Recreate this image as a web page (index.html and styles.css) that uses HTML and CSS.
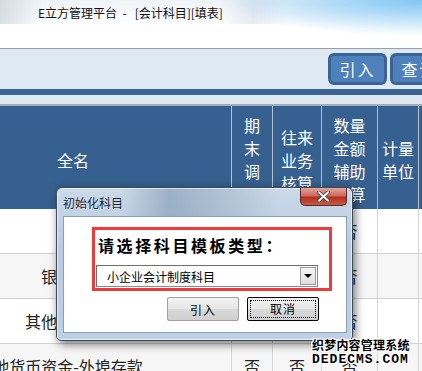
FILE: index.html
```html
<!DOCTYPE html>
<html lang="zh-CN">
<head>
  <meta charset="UTF-8">
  <meta name="viewport" content="width=device-width, initial-scale=1.0">
  <title>E立方管理平台 - [会计科目][填表]</title>
  <link rel="stylesheet" href="styles.css">
</head>
<body>
  <div class="titlebar">
    <span class="title-text">E立方管理平台 &nbsp;- &nbsp;&nbsp;[会计科目][填表]</span>
  </div>

  <div class="toolbar">
    <button class="tool-btn">引入</button>
    <button class="tool-btn">查询</button>
  </div>
  <div class="bar"></div>
  <div class="band"></div>

  <div class="grid">
    <div class="th name">全名</div>
    <div class="th">期<br>末<br>调<br>汇</div>
    <div class="th">往来<br>业务<br>核算</div>
    <div class="th">数量<br>金额<br>辅助<br>核算</div>
    <div class="th">计量<br>单位</div>
    <div class="th"></div>

    <div class="td name">现金</div>
    <div class="td">否</div>
    <div class="td">否</div>
    <div class="td">否</div>
    <div class="td"></div>
    <div class="td"></div>

    <div class="td name alt">银行存款</div>
    <div class="td alt">否</div>
    <div class="td alt">否</div>
    <div class="td alt">否</div>
    <div class="td alt"></div>
    <div class="td alt"></div>

    <div class="td name">其他货币资金</div>
    <div class="td">否</div>
    <div class="td">否</div>
    <div class="td">否</div>
    <div class="td"></div>
    <div class="td"></div>

    <div class="td name long alt">其他货币资金-外埠存款</div>
    <div class="td alt">否</div>
    <div class="td alt">否</div>
    <div class="td alt">否</div>
    <div class="td alt"></div>
    <div class="td alt"></div>
  </div>

  <!-- 初始化科目 dialog -->
  <div class="dialog">
    <div class="dlg-head">
      <span class="dlg-title">初始化科目</span>
      <span class="dlg-close">
        <svg width="13" height="11" viewBox="0 0 13 11">
          <path d="M2 1.5 L11 9.5 M11 1.5 L2 9.5" stroke="#3a3a3a" stroke-width="3.6" stroke-linecap="square"/>
          <path d="M2 1.5 L11 9.5 M11 1.5 L2 9.5" stroke="#fff" stroke-width="2" stroke-linecap="square"/>
        </svg>
      </span>
    </div>
    <div class="dlg-body">
      <div class="pick-box">
        <div class="pick-label">请选择科目模板类型：</div>
        <div class="combo">
          <span class="combo-text">小企业会计制度科目</span>
          <span class="combo-arrow">
            <svg width="8" height="4" viewBox="0 0 8 4"><path d="M0 0 H8 L4 4 Z" fill="#000"/></svg>
          </span>
        </div>
      </div>
      <div class="dlg-buttons">
        <button class="win-btn">引入</button>
        <button class="win-btn focus"><span>取消</span></button>
      </div>
    </div>
  </div>

  <div class="watermark">
    <div class="wm-cn">织梦内容管理系统</div>
    <div class="wm-en">DEDECMS.COM</div>
  </div>
</body>
</html>
```

FILE: styles.css
```css
body {
  margin: 0;
  width: 422px;
  height: 371px;
  overflow: hidden;
  position: relative;
  background: #fff;
  font-family: 'Noto Sans CJK SC', 'Liberation Sans', sans-serif;
}

.titlebar {
  height: 48px;
  border-bottom: 1px solid #9a9fa5;
  background:
    radial-gradient(ellipse 200px 36px at 100% 0, #7fc6f4, rgba(127, 198, 244, 0)),
    linear-gradient(to right, rgba(200, 208, 218, 0.7), rgba(255, 255, 255, 0) 10%, rgba(255, 255, 255, 0) 52%, rgba(214, 222, 232, 0.6) 60%, rgba(255, 255, 255, 0) 68%),
    linear-gradient(#eef3f8, #fff 55%);
  background-size: 100% 100%, 100% 24px, 100% 100%;
  background-repeat: no-repeat;
}

.title-text {
  display: block;
  padding: 4px 0 0 38px;
  font-size: 12px;
  line-height: 17px;
  color: #111;
}

.toolbar {
  height: 40px;
  margin-right: -27px;
  background: #dfe9f4;
  display: flex;
  justify-content: flex-end;
  align-items: flex-start;
  gap: 3px;
  padding-top: 4px;
  box-sizing: border-box;
}

.tool-btn {
  width: 59px;
  height: 32px;
  border: 3px solid #3b6394;
  border-radius: 6px;
  background: #4e80bc;
  color: #fff;
  font-family: inherit;
  font-size: 16px;
  letter-spacing: 2px;
  padding: 0;
}

.bar {
  height: 6px;
  background: #3a6392;
}

.band {
  height: 9px;
  background: #dde8f3;
  border-bottom: 2px solid #a6adb5;
}

.grid {
  display: grid;
  grid-template-columns: 232px 41px 49px 56px 41px 60px;
  grid-template-rows: 103px 45px 45px 45px 45px;
}

.th {
  background: #36608f;
  color: #fff;
  font-size: 16px;
  line-height: 23px;
  text-align: center;
  border-right: 1px solid #b4c0cc;
  display: flex;
  align-items: center;
  justify-content: center;
  padding-top: 5px;
  box-sizing: border-box;
}

.td {
  background: #fff;
  color: #222;
  font-size: 16px;
  border-right: 1px solid #d6d6d6;
  border-bottom: 1px solid #d0d0d0;
  display: flex;
  align-items: center;
  justify-content: center;
  white-space: nowrap;
}

.td.alt {
  background: #f6f6f6;
}

.name {
  padding-right: 85px;
}

.name.long {
  padding-right: 111px;
}

.dialog {
  position: absolute;
  left: 56px;
  top: 187px;
  width: 297px;
  height: 154px;
  box-sizing: border-box;
  border: 1px solid #3f4b58;
  border-radius: 6px 6px 5px 5px;
  padding: 0 5px 7px 6px;
  display: flex;
  flex-direction: column;
  background:
    linear-gradient(to right, rgba(255, 255, 255, 0) 22%, rgba(120, 144, 170, 0.55) 38%, rgba(150, 170, 192, 0.4) 60%, rgba(255, 255, 255, 0) 75%),
    linear-gradient(#cbd9e8, #b8cce0 40%, #bfd1e4);
  background-size: 100% 28px, 100% 100%;
  background-repeat: no-repeat;
  box-shadow: 2px 3px 10px rgba(0, 0, 0, 0.55), inset 0 0 0 1px rgba(255, 255, 255, 0.6);
}

.dlg-head {
  height: 28px;
  display: flex;
  justify-content: space-between;
  align-items: flex-start;
}

.dlg-title {
  align-self: center;
  font-size: 12px;
  color: #1f2a36;
}

.dlg-close {
  width: 47px;
  height: 18px;
  box-sizing: border-box;
  border: 1px solid #5a2a2a;
  border-top: none;
  border-radius: 0 0 5px 5px;
  background: linear-gradient(#e2a59a, #cf6a5c 45%, #b3301f 55%, #c65a42);
  display: flex;
  align-items: center;
  justify-content: center;
}

.dlg-body {
  flex: 1;
  background: #fff;
  border: 1px solid #8a9db2;
  padding: 10px 0 0 28px;
}

.pick-box {
  width: 240px;
  height: 64px;
  box-sizing: border-box;
  border: 3px solid #ef3b3b;
  padding: 5px 0 0 1px;
}

.pick-label {
  padding-left: 2px;
  font-size: 16px;
  line-height: 20px;
  font-weight: bold;
  letter-spacing: 2.6px;
  color: #000;
}

.combo {
  margin-top: 10px;
  width: 222px;
  height: 22px;
  box-sizing: border-box;
  border: 1px solid #8a8a8a;
  border-top-color: #6e6e6e;
  border-left-color: #6e6e6e;
  display: flex;
  align-items: center;
  justify-content: space-between;
  padding: 0 1px 0 10px;
}

.combo-text {
  font-size: 12px;
  color: #000;
}

.combo-arrow {
  width: 16px;
  height: 18px;
  box-sizing: border-box;
  border: 1px solid #9a9a9a;
  background: linear-gradient(#f6f6f6, #dedede);
  display: flex;
  align-items: center;
  justify-content: center;
}

.dlg-buttons {
  display: flex;
  justify-content: flex-end;
  gap: 8px;
  padding: 6px 27px 0 0;
}

.win-btn {
  width: 72px;
  height: 24px;
  padding: 0;
  border: 1px solid #a0a0a0;
  border-radius: 2px;
  background: linear-gradient(#f2f2f2, #e6e6e6 50%, #dadada 51%, #cfcfcf);
  font-family: inherit;
  font-size: 12px;
  letter-spacing: 1px;
  color: #000;
}

.win-btn.focus {
  border: 1px solid #000;
  padding: 2px;
}

.win-btn.focus span {
  display: block;
  height: 100%;
  box-sizing: border-box;
  border: 1px dotted #000;
  line-height: 16px;
}

.watermark {
  position: absolute;
  left: 312px;
  top: 337px;
  color: #000;
  font-weight: bold;
  text-shadow: 1px 0 #fff, -1px 0 #fff, 0 1px #fff, 0 -1px #fff, 1px 1px #fff, -1px -1px #fff, 1px -1px #fff, -1px 1px #fff;
}

.wm-cn {
  font-size: 12px;
  line-height: 15px;
  letter-spacing: 0.2px;
}

.wm-en {
  font-family: 'Liberation Mono', monospace;
  font-size: 13px;
  line-height: 15px;
  letter-spacing: 1px;
}
```
